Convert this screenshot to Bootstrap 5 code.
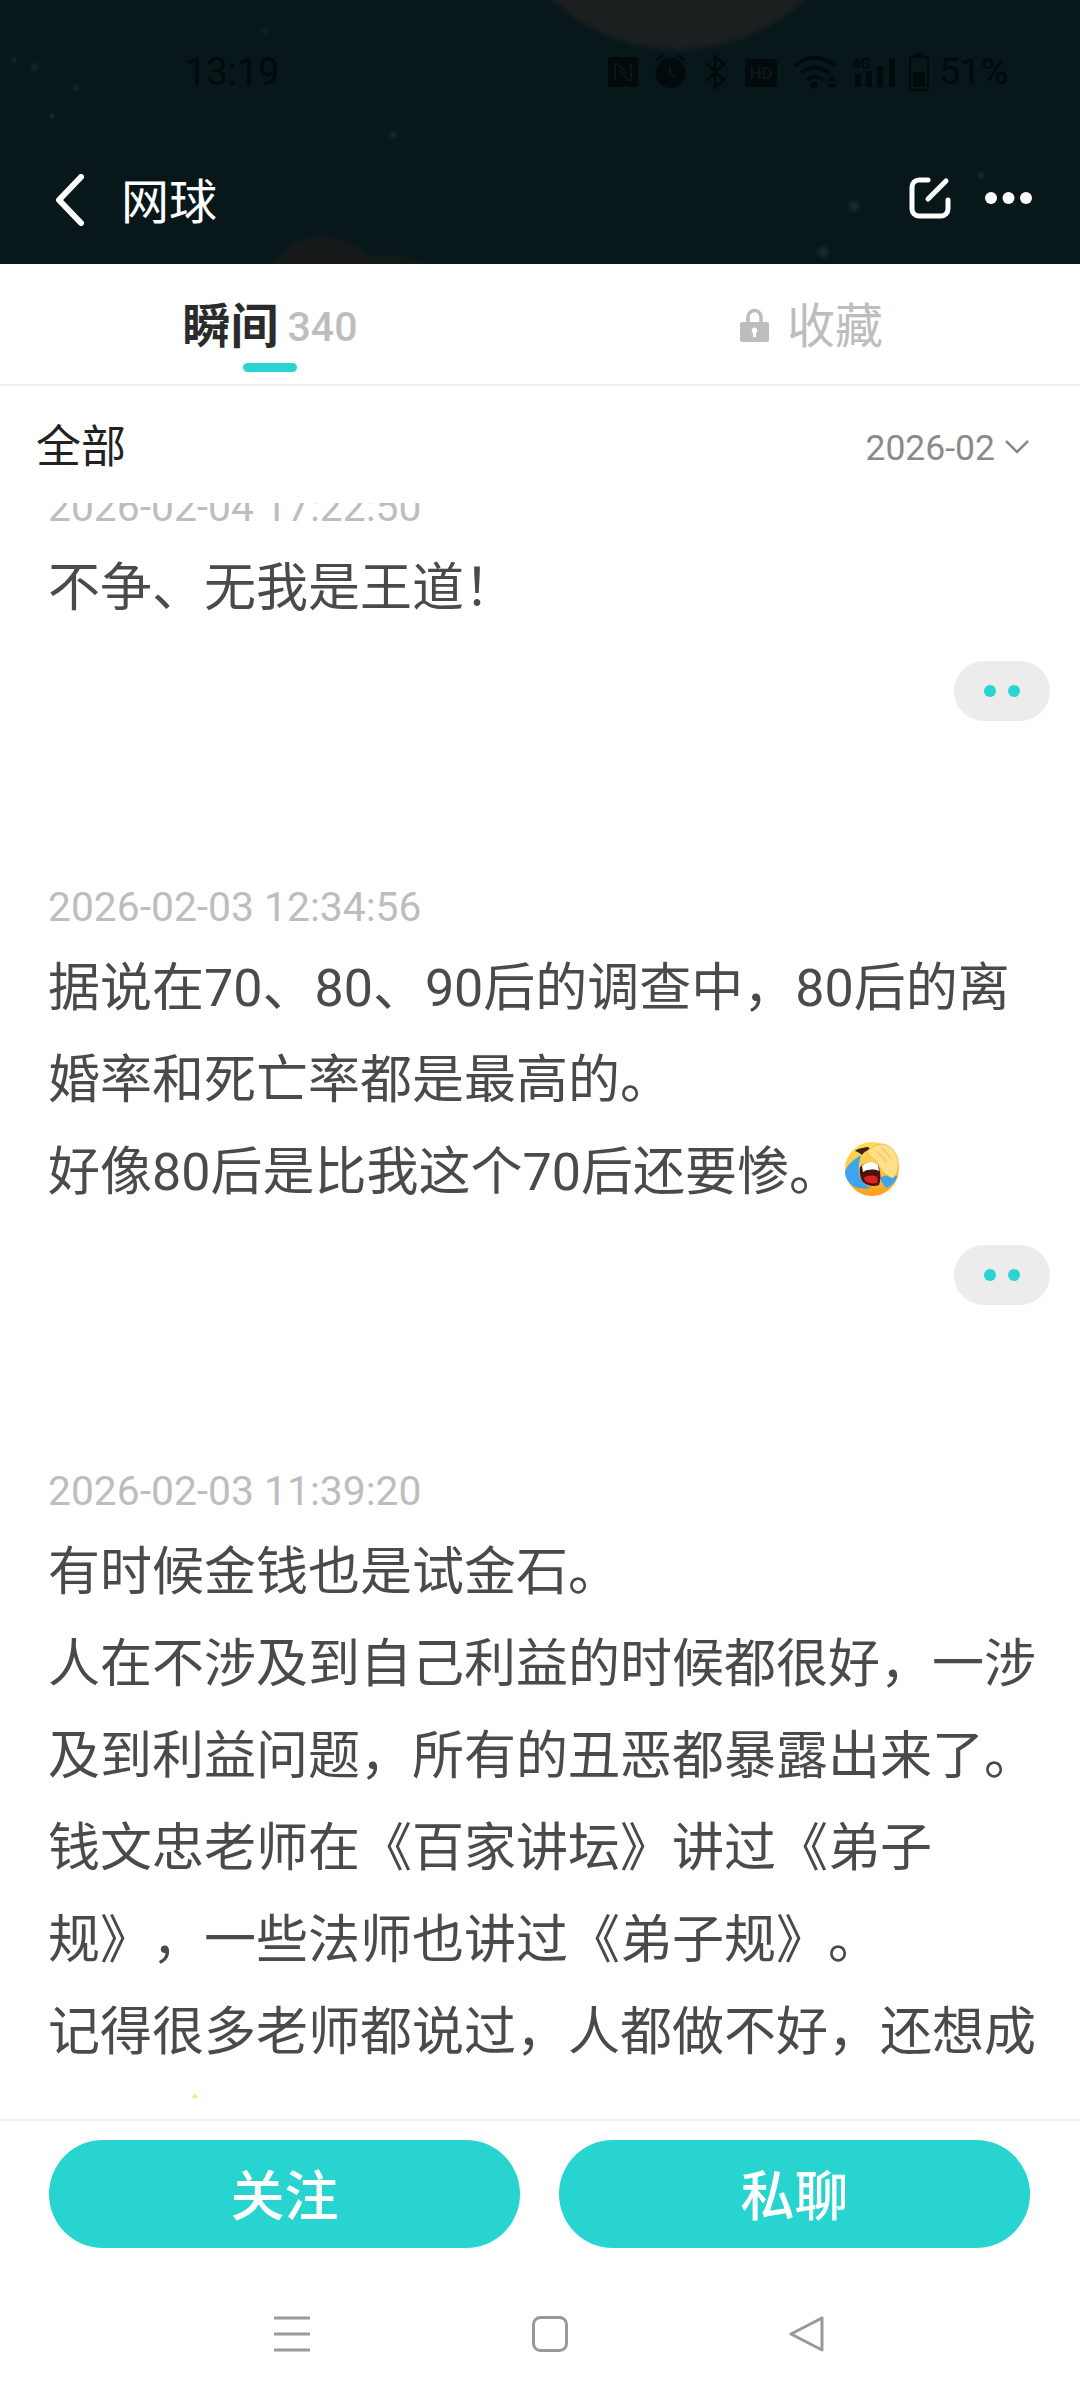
<!DOCTYPE html>
<html lang="zh-CN">
<head>
    <meta charset="UTF-8" />
    <meta name="viewport" content="width=device-width, initial-scale=1" />
    <title>网球</title>
    <link href="https://cdn.jsdelivr.net/npm/bootstrap@5.3.0/dist/css/bootstrap.min.css" rel="stylesheet" />
    <style>
      body { width: 1080px; height: 2400px; overflow: hidden; background: #fff; font-family: Roboto, "Noto Sans CJK SC", sans-serif; }
      .page { height: 2400px; }

      /* dark header with planets and stars */
      .top-head {
        height: 264px; color: #fff;
        background-color: #07171a;
        background-image:
          radial-gradient(circle 188px at 678px -135px, #1c1f20 96%, transparent 100%),
          radial-gradient(circle 63px at 322px 298px, #16191a 94%, transparent 100%),
          radial-gradient(ellipse 60px 34px at 385px 288px, transparent 70%, #12191a 75%, #12191a 95%, transparent 100%),
          radial-gradient(circle 6px at 34px 67px, #17292b, transparent),
          radial-gradient(circle 4px at 14px 60px, #17292b, transparent),
          radial-gradient(circle 5px at 76px 88px, #15262a, transparent),
          radial-gradient(circle 4px at 52px 116px, #1b2c2e, transparent),
          radial-gradient(circle 5px at 393px 135px, #1b2c2e, transparent),
          radial-gradient(circle 4px at 265px 31px, #15262a, transparent),
          radial-gradient(circle 8px at 854px 206px, #1d3032, transparent),
          radial-gradient(circle 8px at 823px 252px, #1d3032, transparent),
          radial-gradient(circle 5px at 981px 175px, #1b2c2e, transparent);
      }
      .status-row { height: 150px; padding: 50px 72px 0 185px; color: #030a0c; }
      .status-time { font-size: 38px; line-height: 44px; }
      .status-pct { font-size: 37px; line-height: 44px; margin-left: 6px; }
      .status-icons { width: 325px; height: 42px; }
      .status-small { font-family: Roboto, sans-serif; font-weight: 700; }
      .title-row { height: 114px; padding: 21px 48px 0 55px; }
      .title-text { font-size: 48px; line-height: 52px; margin-left: 36px; padding-top: 6px; }
      .title-tools { margin-top: 5px; gap: 33px; }

      /* tabs */
      .tab-row { height: 122px; border-bottom: 2px solid #eee; }
      .tab-item { width: 540px; height: 120px; padding-top: 33px; }
      .tab-label { font-size: 48px; line-height: 60px; height: 66px; }
      .tab-on { color: #2b2b2b; font-weight: 700; }
      .tab-count { font-size: 41px; font-weight: 500; color: #bdbdbd; margin-left: 9px; vertical-align: 2px; }
      .tab-off { color: #bdbdbd; }
      .tab-bar { width: 54px; height: 9px; border-radius: 5px; background: #2ad4d0; }
      .lock-icon { margin: 0 18px 0 3px; vertical-align: 1px; }

      /* filter */
      .filter-row { height: 117px; padding: 0 50px 0 36px; }
      .filter-all { font-size: 45px; color: #222; line-height: 124px; }
      .filter-month { font-size: 35.5px; color: #8a8a8a; line-height: 124px; }
      .filter-month svg { margin-left: 9px; vertical-align: 6px; }

      /* list */
      .feed { flex: 1 1 0; min-height: 0; overflow: hidden; padding: 0 44px 0 48px; }
      .feed-item { margin-bottom: 156px; }
      .feed-item:first-child { margin-top: -26px; }
      .feed-time { font-size: 40.8px; line-height: 60px; height: 60px; color: #bdbdbd; }
      .feed-text { font-size: 52px; line-height: 92px; margin-top: 6px; color: #4a4a4a; white-space: nowrap; text-spacing-trim: space-all; font-feature-settings: "palt" 0, "halt" 0, "chws" 0; }
      .feed-emoji { vertical-align: -6px; margin-left: 2px; }
      .more-pill { width: 96px; height: 60px; margin: 26px -14px 0 auto; border-radius: 30px; background: #ececec; gap: 12px; }
      .more-dot { width: 12px; height: 12px; border-radius: 50%; background: #2ad4d0; }
      .feed-speck { display: block; margin: 14px 0 0 144px; }

      /* bottom */
      .action-row { border-top: 2px solid #f1f1f1; padding: 19px 50px 0 49px; gap: 39px; height: 129px; }
      .action-btn { flex: 1 1 0; height: 108px; background: #28d4d0; border: 0; color: #fff; font-size: 54px; font-weight: 500; line-height: 108px; padding: 4px 0 0; }
      .soft-nav { height: 152px; padding: 68px 255px 0 274px; }
    </style>
</head>
<body>
<div class="page d-flex flex-column">
  <header class="top-head">
    <div class="status-row d-flex justify-content-between align-items-start">
      <span class="status-time">13:19</span>
      <div class="d-flex align-items-start">
        <svg class="status-icons" viewBox="611 50 325 42" fill="#030a0c">
          <!-- nfc -->
          <rect x="611" y="57" width="30" height="30" rx="3"/>
          <path d="M618 80V64h3l9 10M634 64v16h-3l-9-10" fill="none" stroke="#07171a" stroke-width="2"/>
          <!-- alarm -->
          <circle cx="673.500" cy="73" r="15"/>
          <path d="M659 61l7-6M688 61l-7-6" fill="none" stroke="#030a0c" stroke-width="2.500"/>
          <path d="M673 66v7l4 4" fill="none" stroke="#07171a" stroke-width="2"/>
          <!-- bluetooth -->
          <path d="M709 63l18 17-9 8V56l9 8-18 17" fill="none" stroke="#030a0c" stroke-width="2.500"/>
          <!-- hd -->
          <rect x="748" y="59" width="32" height="28" rx="4"/>
          <text class="status-small" x="764" y="79" font-size="17" text-anchor="middle" fill="#07171a">HD</text>
          <!-- wifi -->
          <path d="M798 66c12-11 28-11 40 0M804 73c8-7 20-7 28 0M810 80c4-4 12-4 16 0" fill="none" stroke="#030a0c" stroke-width="3.500"/>
          <circle cx="817" cy="85" r="3.500"/>
          <path d="M830 81l5-5 5 5zM830 84l5 5 5-5z"/>
          <!-- signal -->
          <text class="status-small" x="855" y="69" font-size="15">4G</text>
          <rect x="858" y="74" width="6" height="13"/><rect x="869" y="71" width="6" height="16"/><rect x="880" y="66" width="6" height="21"/><rect x="892" y="58" width="6" height="29"/>
          <!-- battery -->
          <rect x="913" y="57" width="18" height="33" rx="3" fill="none" stroke="#030a0c" stroke-width="2"/>
          <rect x="918" y="53" width="8" height="3"/>
          <rect x="916" y="72" width="12" height="15"/>
        </svg>
        <span class="status-pct">51%</span>
      </div>
    </div>
    <div class="title-row d-flex justify-content-between align-items-start">
      <div class="d-flex align-items-center">
        <svg width="30" height="52" viewBox="0 0 30 52"><path d="M26 3L4 26l22 23" fill="none" stroke="#fff" stroke-width="6" stroke-linecap="round" stroke-linejoin="round"/></svg>
        <span class="title-text">网球</span>
      </div>
      <div class="title-tools d-flex align-items-center">
        <svg width="44" height="44" viewBox="0 0 44 44"><path d="M20 4h-9a7 7 0 0 0-7 7v22a7 7 0 0 0 7 7h22a7 7 0 0 0 7-7V24" fill="none" stroke="#fff" stroke-width="5" stroke-linecap="round"/><path d="M38 5L20 23" fill="none" stroke="#fff" stroke-width="5" stroke-linecap="round"/></svg>
        <svg width="47" height="14" viewBox="0 0 47 14"><circle cx="6" cy="7" r="6" fill="#fff"/><circle cx="23.500" cy="7" r="6" fill="#fff"/><circle cx="41" cy="7" r="6" fill="#fff"/></svg>
      </div>
    </div>
  </header>

  <div class="tab-row d-flex">
    <div class="tab-item d-flex flex-column align-items-center">
      <div class="tab-label tab-on">瞬间<span class="tab-count">340</span></div>
      <div class="tab-bar"></div>
    </div>
    <div class="tab-item d-flex flex-column align-items-center">
      <div class="tab-label tab-off">
        <svg class="lock-icon" width="29" height="34" viewBox="0 0 29 34"><path d="M8 15V9a6.500 6.500 0 0 1 13 0v6" fill="none" stroke="#bdbdbd" stroke-width="3.500"/><path fill-rule="evenodd" d="M2 14h25a2 2 0 0 1 2 2v16a2 2 0 0 1-2 2H2a2 2 0 0 1-2-2V16a2 2 0 0 1 2-2zM14.500 19.500a3 3 0 0 0-1.500 5.500V29h3v-4a3 3 0 0 0-1.500-5.500z" fill="#bdbdbd"/></svg>收藏
      </div>
    </div>
  </div>

  <div class="filter-row d-flex justify-content-between">
    <span class="filter-all">全部</span>
    <span class="filter-month">2026-02<svg width="26" height="15" viewBox="0 0 26 15"><path d="M2 2l11 11L24 2" fill="none" stroke="#8a8a8a" stroke-width="2.500"/></svg></span>
  </div>

  <main class="feed">
    <section class="feed-item">
      <div class="feed-time">2026-02-04 17:22:50</div>
      <div class="feed-text">不争、无我是王道&#xFF01;</div>
      <div class="more-pill d-flex align-items-center justify-content-center"><span class="more-dot"></span><span class="more-dot"></span></div>
    </section>
    <section class="feed-item">
      <div class="feed-time">2026-02-03 12:34:56</div>
      <div class="feed-text">据说在70、80、90后的调查中&#xFF0C;80后的离<br>婚率和死亡率都是最高的。<br>好像80后是比我这个70后还要惨。<svg class="feed-emoji" width="60" height="54" viewBox="0 0 60 54">
        <defs><linearGradient id="faceFill" x1="0" y1="0" x2="0" y2="1"><stop offset="0" stop-color="#ffdc5e"/><stop offset="0.6" stop-color="#ffc23a"/><stop offset="1" stop-color="#ff9a1f"/></linearGradient></defs>
        <circle cx="29" cy="27" r="27" fill="url(#faceFill)"/>
        <!-- tears -->
        <path d="M18 13C11 17 3 24 2 30c0 6 4 12 10 15 6 2 12 2 16 1-6-3-11-8-12-14-1-6 0-13 2-19z" fill="#3fa4ee"/>
        <path d="M37 36c2-2 6-3 11-2 3 0 5 0 7-1-2 6-6 11-12 13-3-3-5-7-6-10z" fill="#3fa4ee"/>
        <!-- mouth -->
        <path d="M17 25c5-6 13-6 18-2 3 7 3 14 1 20-5 2-12 1-16-3-3-4-4-10-3-15z" fill="#4a1510"/>
        <path d="M19 24c4-5 12-5 16-1l1 6c-5-2-11-2-16 1z" fill="#fff"/>
        <path d="M21 36c3-3 10-3 13-1 1 2 1 4 0 6-5 1-9 0-12-2z" fill="#e0201c"/>
        <!-- brow -->
        <path d="M12 9c3-3 8-3 12-4 2 0 3 1 2 3-3 1-5 2-7 5-2-2-4-3-7-4z" fill="#3c2410"/>
        <!-- hand -->
        <path d="M24 9c6-4 10-7 15-7 9 1 15 8 16 17 1 7-1 13-5 17-4-1-8-4-12-9-3-5-5-9-9-11-2-2-4-4-5-7z" fill="#ffe08a" stroke="#f9b23c" stroke-width="0.800"/>
        <path d="M33 9c4 3 8 7 11 12M39 6c3 3 7 7 9 11" fill="none" stroke="#f4c25a" stroke-width="1.200"/>
      </svg></div>
      <div class="more-pill d-flex align-items-center justify-content-center"><span class="more-dot"></span><span class="more-dot"></span></div>
    </section>
    <section class="feed-item">
      <div class="feed-time">2026-02-03 11:39:20</div>
      <div class="feed-text">有时候金钱也是试金石。<br>人在不涉及到自己利益的时候都很好&#xFF0C;一涉<br>及到利益问题&#xFF0C;所有的丑恶都暴露出来了。<br>钱文忠老师在《百家讲坛》讲过《弟子<br>规》&#xFF0C;一些法师也讲过《弟子规》。<br>记得很多老师都说过&#xFF0C;人都做不好&#xFF0C;还想成</div>
      <svg class="feed-speck" width="6" height="5" viewBox="0 0 6 5"><path d="M3 0l3 5H0z" fill="#ffe27a"/></svg>
    </section>
  </main>

  <div class="action-row d-flex">
    <button class="btn rounded-pill action-btn" type="button">关注</button>
    <button class="btn rounded-pill action-btn" type="button">私聊</button>
  </div>

  <div class="soft-nav d-flex justify-content-between align-items-start">
    <svg width="36" height="36" viewBox="0 0 36 36"><path d="M0 2h36M0 18h36M0 34h36" stroke="#999" stroke-width="3"/></svg>
    <svg width="36" height="36" viewBox="0 0 36 36"><rect x="1.500" y="1.500" width="33" height="33" rx="7" fill="none" stroke="#999" stroke-width="3"/></svg>
    <svg width="36" height="36" viewBox="0 0 36 36"><path d="M33 2v32L2 18z" fill="none" stroke="#999" stroke-width="3" stroke-linejoin="round"/></svg>
  </div>
</div>
<script src="https://cdn.jsdelivr.net/npm/bootstrap@5.3.0/dist/js/bootstrap.bundle.min.js"></script>
</body>
</html>
